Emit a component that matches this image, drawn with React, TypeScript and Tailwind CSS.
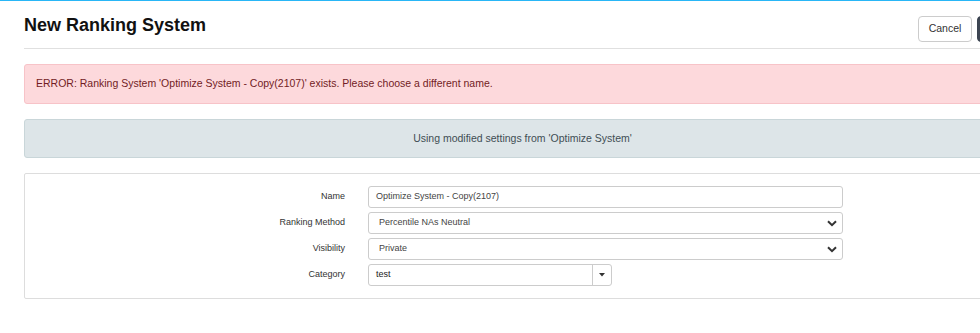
export default function App() {
  const font = { fontFamily: '"Liberation Sans", Arial, sans-serif' };

  const Chevron = () => (
    <svg width="10" height="7" viewBox="0 0 10 7" className="shrink-0">
      <path d="M1 1.2l4 4 4-4" fill="none" stroke="#333" strokeWidth="2" />
    </svg>
  );

  return (
    <div className="w-full min-h-[333px] overflow-hidden bg-white" style={font}>
      <div className="w-[1045px] border-t border-[#29b6f6] pl-[24px] pr-[24px]">
        {/* header */}
        <div className="flex h-[48px] items-start justify-between border-b border-[#e0e0e0]">
          <h1 className="mt-[14px] text-[18px] font-bold leading-[20px] text-[#111]">New Ranking System</h1>
          <div className="mt-[15px] flex gap-[5px]">
            <button className="h-[26px] w-[54px] rounded-[4px] border border-[#ccc] bg-white text-[10.5px] text-[#333]">
              Cancel
            </button>
            <button
              aria-label="Save"
              className="flex h-[26px] w-[44px] items-center justify-end rounded-[4px] border border-[#3a4350] bg-[#3d4552] pr-[8px]"
            >
              <svg width="12" height="12" viewBox="0 0 12 12">
                <path d="M2 6.5l2.5 2.5L10 3.5" fill="none" stroke="#fff" strokeWidth="1.5" />
              </svg>
            </button>
          </div>
        </div>

        {/* error */}
        <div className="mt-[15px] flex h-[40px] items-center rounded-[3px] border border-[#f7c3c8] bg-[#fdd9dc] px-[11px] text-[10.5px] text-[#721c24]">
          ERROR: Ranking System 'Optimize System - Copy(2107)' exists. Please choose a different name.
        </div>

        {/* info */}
        <div className="mt-[15px] flex h-[39px] items-center justify-center rounded-[3px] border border-[#c9d6d9] bg-[#dde5e8] text-[10.5px] text-[#3f4e54]">
          Using modified settings from 'Optimize System'
        </div>

        {/* form */}
        <div className="mt-[15px] flex h-[126px] flex-col gap-[4px] rounded-[2px] border border-[#ddd] bg-white pt-[12px] text-[9px] text-[#333]">
          <div className="flex items-center">
            <label className="w-[320px] text-right">Name</label>
            <div className="ml-[23px] flex h-[22px] w-[475px] items-center rounded-[3px] border border-[#ccc] px-[7px] text-[#444]">
              Optimize System - Copy(2107)
            </div>
          </div>
          <div className="flex items-center">
            <label className="w-[320px] text-right">Ranking Method</label>
            <div className="ml-[23px] flex h-[22px] w-[475px] items-center justify-between rounded-[3px] border border-[#ccc] pl-[10px] pr-[5px] text-[#444]">
              <span>Percentile NAs Neutral</span>
              <Chevron />
            </div>
          </div>
          <div className="flex items-center">
            <label className="w-[320px] text-right">Visibility</label>
            <div className="ml-[23px] flex h-[22px] w-[475px] items-center justify-between rounded-[3px] border border-[#ccc] pl-[10px] pr-[5px] text-[#444]">
              <span>Private</span>
              <Chevron />
            </div>
          </div>
          <div className="flex items-center">
            <label className="w-[320px] text-right">Category</label>
            <div className="ml-[23px] flex h-[22px] w-[244px] items-stretch rounded-[3px] border border-[#ccc] text-[#222]">
              <div className="flex flex-1 items-center px-[7px]">test</div>
              <div className="flex w-[19px] items-center justify-center border-l border-[#ccc]">
                <svg width="6" height="4" viewBox="0 0 6 4">
                  <path d="M0 0h6L3 3.5z" fill="#333" />
                </svg>
              </div>
            </div>
          </div>
        </div>
      </div>
    </div>
  );
}
